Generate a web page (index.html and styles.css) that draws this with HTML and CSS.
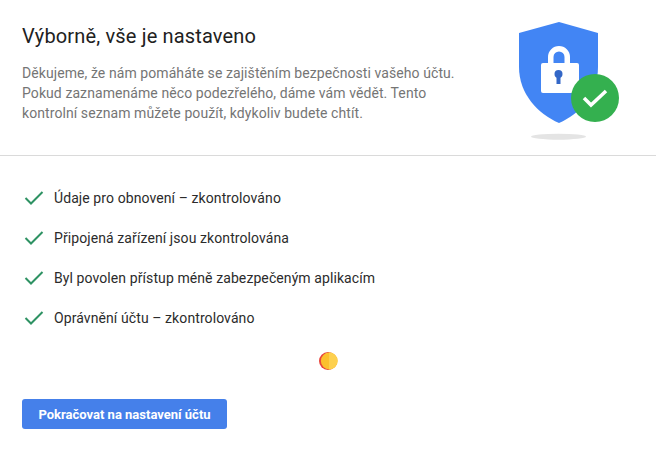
FILE: index.html
```html
<!DOCTYPE html>
<html lang="cs">
  <head>
    <meta charset="UTF-8" />
    <title>Kontrola zabezpečení</title>
    <link rel="stylesheet" href="styles.css">
  </head>
  <body>
    <div class="header">
      <div class="intro">
        <h1>Výborně, vše je nastaveno</h1>
        <p>Děkujeme, že nám pomáháte se zajištěním bezpečnosti vašeho účtu. Pokud zaznamenáme něco podezřelého, dáme vám vědět. Tento kontrolní seznam můžete použít, kdykoliv budete chtít.</p>
      </div>
      <svg class="shield" width="104" height="120" viewBox="0 0 104 120">
        <ellipse cx="40.5" cy="114.7" rx="27.5" ry="3" fill="#e4e4e4" />
        <path d="M41 0 L80 11 V45 C80 72 62 92 41 101 C20 92 1 72 1 45 V11 Z" fill="#4285f4" />
        <path d="M30 44 V35 A11 11 0 0 1 52 35 V44 H46.5 V35 A5.5 5.5 0 0 0 35.5 35 V44 Z" fill="#fff" />
        <rect x="23" y="41" width="38" height="30" rx="2" fill="#fff" />
        <circle cx="40.5" cy="52" r="4" fill="#3367c7" />
        <rect x="38.5" y="53" width="4" height="9" fill="#3367c7" />
        <circle cx="77" cy="76" r="24" fill="#34b04f" />
        <path d="M66 76 L73 83 L88 69" fill="none" stroke="#fff" stroke-width="3.5" />
      </svg>
    </div>
    <ul class="checks">
      <li>
        <svg width="20" height="16" viewBox="0 0 20 16"><path d="M1.5 8 L7 13.5 L18.5 2" fill="none" stroke="#2e9263" stroke-width="2" /></svg>
        Údaje pro obnovení – zkontrolováno
      </li>
      <li>
        <svg width="20" height="16" viewBox="0 0 20 16"><path d="M1.5 8 L7 13.5 L18.5 2" fill="none" stroke="#2e9263" stroke-width="2" /></svg>
        Připojená zařízení jsou zkontrolována
      </li>
      <li>
        <svg width="20" height="16" viewBox="0 0 20 16"><path d="M1.5 8 L7 13.5 L18.5 2" fill="none" stroke="#2e9263" stroke-width="2" /></svg>
        Byl povolen přístup méně zabezpečeným aplikacím
      </li>
      <li>
        <svg width="20" height="16" viewBox="0 0 20 16"><path d="M1.5 8 L7 13.5 L18.5 2" fill="none" stroke="#2e9263" stroke-width="2" /></svg>
        Oprávnění účtu – zkontrolováno
      </li>
    </ul>
    <div class="loader">
      <svg width="20" height="20" viewBox="0 0 20 20">
        <circle cx="10" cy="10" r="9" fill="#e8453c" />
        <circle cx="11.3" cy="10" r="8.4" fill="#fbc02d" />
        <path d="M11 1.6 A8.4 8.4 0 0 1 11 18.4 Z" fill="#fdd04f" />
      </svg>
    </div>
    <button type="button" class="next">Pokračovat na nastavení účtu</button>
  </body>
</html>
```

FILE: styles.css
```css
* {
  box-sizing: border-box;
}
body {
  margin: 0;
  background-color: #fff;
  font-family: Roboto, "Liberation Sans", sans-serif;
}
.header {
  display: flex;
  justify-content: space-between;
  height: 156px;
  padding: 22px 34px 0 22px;
  border-bottom: 1px solid #dadada;
}
.intro {
  width: 450px;
}
h1 {
  margin: 0 0 13px;
  font-size: 20px;
  font-weight: 400;
  line-height: 28px;
  letter-spacing: 0.16px;
  color: #212121;
}
p {
  margin: 0;
  font-size: 14px;
  line-height: 20px;
  letter-spacing: 0.08px;
  color: #757575;
}
.shield {
  flex: none;
}
.checks {
  margin: 22px 0 0;
  padding: 0 0 0 24px;
  list-style: none;
}
.checks li {
  display: flex;
  align-items: center;
  gap: 10px;
  height: 40px;
  font-size: 14px;
  letter-spacing: 0.09px;
  color: #2b2b2b;
}
.loader {
  display: flex;
  justify-content: center;
  margin-top: 13px;
  height: 20px;
}
.next {
  display: block;
  width: 205px;
  height: 30px;
  margin: 28px 0 0 22px;
  border: none;
  border-radius: 3px;
  background-color: #4580ea;
  color: #fff;
  font-family: Roboto, "Liberation Sans", sans-serif;
  font-size: 13px;
  font-weight: 700;
}
```
